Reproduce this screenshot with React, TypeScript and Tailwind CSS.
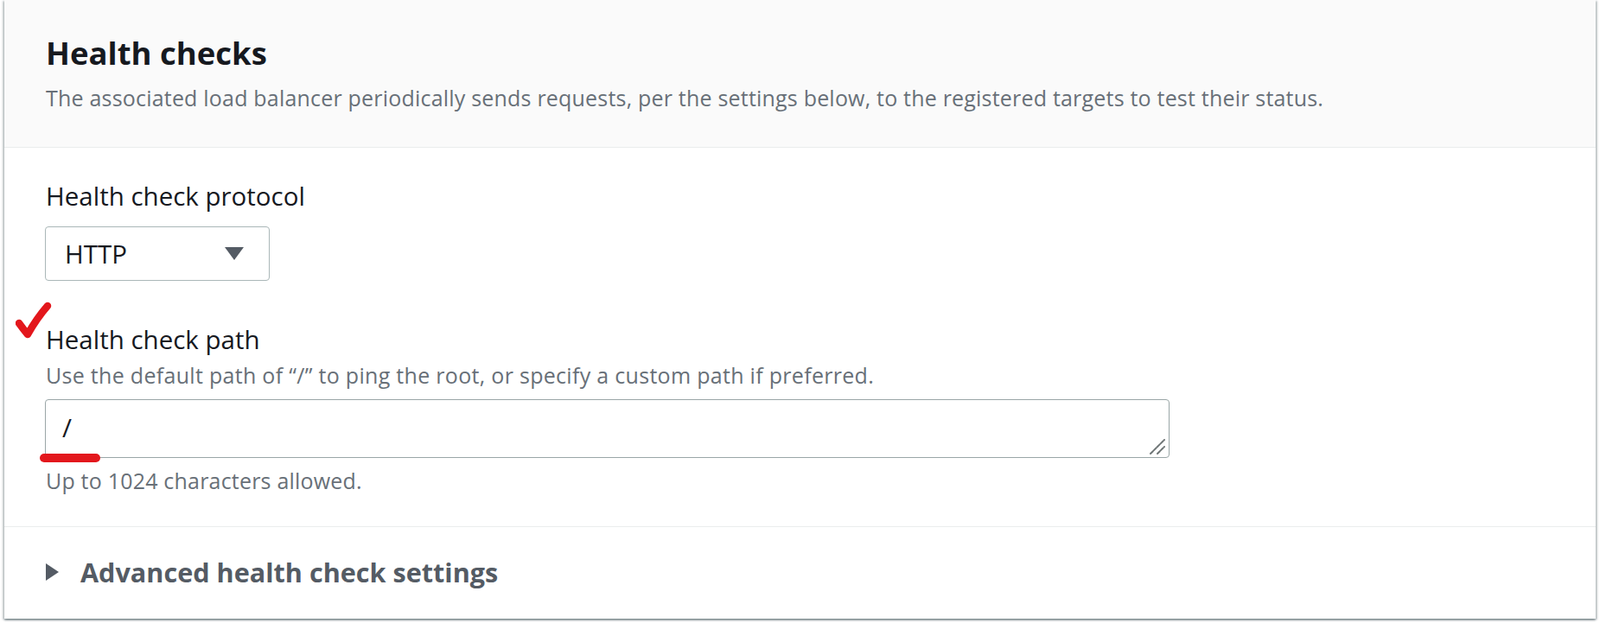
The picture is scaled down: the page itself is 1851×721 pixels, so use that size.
import React from 'react';

const red = '#e3171c';

const CaretDown = () => (
  <svg width="22" height="15" viewBox="0 0 22 15">
    <polygon points="0,0 22,0 11,15" fill="#545b64" />
  </svg>
);

const CaretRight = () => (
  <svg width="15" height="20" viewBox="0 0 15 20">
    <polygon points="0,0 15,10 0,20" fill="#545b64" />
  </svg>
);

const ResizeGrip = () => (
  <svg width="22" height="22" viewBox="0 0 22 22" className="absolute right-[3px] bottom-[3px]">
    <line x1="3" y1="20" x2="19" y2="4" stroke="#6f7677" strokeWidth="2" strokeLinecap="round" strokeDasharray="4 1.5" />
    <line x1="11" y1="20" x2="19" y2="12" stroke="#6f7677" strokeWidth="2" strokeLinecap="round" strokeDasharray="4 1.5" />
  </svg>
);

const App: React.FC = () => {
  return (
    <div className="relative w-[1851px] h-[721px] bg-white overflow-hidden font-['Open_Sans',sans-serif]">
      <div className="ml-[5px] w-[1841px] h-[716px] bg-white flex flex-col shadow-[0_2px_2px_0_rgba(0,28,36,0.35),2px_1px_2px_0_rgba(0,28,36,0.2),-2px_1px_2px_0_rgba(0,28,36,0.2)]">
        {/* header */}
        <div className="h-[171px] shrink-0 bg-[#fafafa] border-b border-[#eaeded] pl-[48px] pt-[39px]">
          <h2 className="text-[36.5px] leading-[44px] font-bold text-[#16191f]">Health checks</h2>
          <p className="mt-[14px] text-[25px] leading-[32px] tracking-[0.2px] text-[#687078]">
            The associated load balancer periodically sends requests, per the settings below, to the registered targets to test their status.
          </p>
        </div>

        {/* form fields */}
        <div className="shrink-0 pl-[47px] pt-[38px] pb-[37px] border-b border-[#eaeded]">
          <div className="pl-[1px] text-[29.5px] leading-[36px] text-[#16191f]">Health check protocol</div>
          <div className="mt-[17px] w-[260px] h-[63px] border border-[#aab7b8] rounded-[4px] bg-white flex items-center justify-between pl-[22px] pr-[29px]">
            <span className="text-[29.5px] leading-[36px] text-[#16191f]">HTTP</span>
            <CaretDown />
          </div>

          <div className="mt-[50px] pl-[1px] text-[29.5px] leading-[36px] text-[#16191f]">Health check path</div>
          <div className="mt-[7px] pl-[1px] text-[25px] leading-[32px] tracking-[0.3px] text-[#687078]">
            Use the default path of “/” to ping the root, or specify a custom path if preferred.
          </div>
          <div className="relative mt-[12px] w-[1301px] h-[68px]">
            <textarea
              defaultValue="/"
              className="w-full h-full resize-none border border-[#9aa6a7] rounded-[4px] bg-white pl-[19px] pt-[14px] text-[30px] leading-[36px] text-[#16191f] outline-none"
            />
            <ResizeGrip />
          </div>
          <div className="mt-[10px] pl-[1px] text-[25px] leading-[32px] tracking-[0.2px] text-[#687078]">Up to 1024 characters allowed.</div>
        </div>

        {/* expandable */}
        <div className="flex-1 pl-[48px] pt-[33px]">
          <div className="flex items-center gap-[25px] h-[38px]">
            <CaretRight />
            <span className="text-[30.6px] leading-[38px] font-bold text-[#545b64]">Advanced health check settings</span>
          </div>
        </div>
      </div>

      {/* hand-drawn annotations */}
      <svg width="42" height="44" viewBox="0 0 42 44" className="absolute left-[18px] top-[348px]">
        <path d="M4 26 Q9 33 14 39 Q24 21 37 6" fill="none" stroke={red} strokeWidth="8.5" strokeLinecap="round" strokeLinejoin="round" />
      </svg>
      <div className="absolute left-[46px] top-[525px] w-[70px] h-[10px] rounded-full bg-[#e3171c]" />
    </div>
  );
};

export default App;
